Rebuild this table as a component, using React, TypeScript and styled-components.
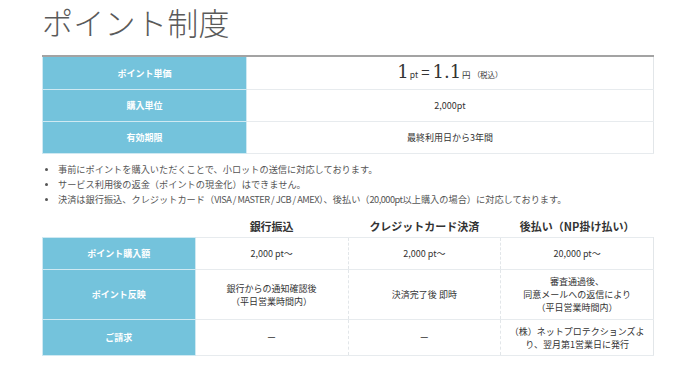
import React from "react";
import styled, { createGlobalStyle } from "styled-components";

const Global = createGlobalStyle`
  html, body { margin: 0; padding: 0; background: #fff; }
  body {
    font-family: "Noto Sans CJK JP", "Noto Sans", sans-serif;
    color: #333;
    width: 700px;
  }
`;

const Page = styled.div`
  padding: 0 46px 0 42px;
`;

const Title = styled.h1`
  margin: 0;
  padding-top: 1px;
  height: 54px;
  font-family: "Noto Sans CJK JP Light", "Noto Sans CJK JP DemiLight", "Noto Sans CJK JP", sans-serif;
  font-size: 31px;
  line-height: 42px;
  font-weight: 300;
  color: #5a5a5a;
  letter-spacing: 0.3px;
`;

const Table = styled.table<{ $top?: boolean }>`
  width: 612px;
  border-collapse: collapse;
  table-layout: fixed;
  border-top: ${(p) => (p.$top ? "2px solid #a3a3a3" : "none")};
`;

const Label = styled.th<{ $h: number }>`
  background: #74c3dc;
  color: #fff;
  font-weight: 700;
  font-size: 9px;
  height: ${(p) => p.$h}px;
  padding: 0;
  border: 1px solid #cfe9f2;
  text-align: center;
`;

const Cell = styled.td<{ $dash?: boolean }>`
  font-size: 9px;
  line-height: 13px;
  text-align: center;
  padding: 0;
  border-top: 1px solid #e7ebee;
  border-bottom: 1px solid #e7ebee;
  border-right: 1px ${(p) => (p.$dash ? "dashed" : "solid")} #e2e6e9;
  color: #333;
`;

const Head = styled.th`
  font-size: 11px;
  font-weight: 700;
  height: 22px;
  padding: 0;
  text-align: center;
  color: #333;
  border: none;
`;

const Price = styled.span`
  display: inline-flex;
  align-items: baseline;
  line-height: 20px;
`;

const Big = styled.span`
  font-family: "DejaVu Serif", "Liberation Serif", serif;
  font-size: 18px;
  color: #333;
`;

const Eq = styled.span`
  font-size: 15px;
  margin: 0 3px 0 3px;
`;

const Small = styled.span`
  font-size: 8.5px;
  margin-left: 1px;
`;

const Tiny = styled.span`
  font-size: 7.5px;
  margin-left: 2px;
`;

const Notes = styled.ul`
  margin: 0;
  padding: 8px 0 8px 16px;
  font-size: 9.2px;
  line-height: 15px;
  color: #555;
  li::marker { font-size: 8px; }
`;

const Latin = styled.span`
  letter-spacing: -0.5px;
`;

export default function App() {
  return (
    <>
      <Global />
      <Page>
        <Title>ポイント制度</Title>
        <Table $top>
          <colgroup>
            <col style={{ width: 204 }} />
            <col />
          </colgroup>
          <tbody>
            <tr>
              <Label $h={32}>ポイント単価</Label>
              <Cell>
                <Price>
                  <Big>1</Big>
                  <Small>pt</Small>
                  <Eq>=</Eq>
                  <Big>1.1</Big>
                  <Small>円</Small>
                  <Tiny>（税込）</Tiny>
                </Price>
              </Cell>
            </tr>
            <tr>
              <Label $h={31}>購入単位</Label>
              <Cell>2,000pt</Cell>
            </tr>
            <tr>
              <Label $h={31}>有効期限</Label>
              <Cell>最終利用日から3年間</Cell>
            </tr>
          </tbody>
        </Table>
        <Notes>
          <li>事前にポイントを購入いただくことで、小ロットの送信に対応しております。</li>
          <li>サービス利用後の返金（ポイントの現金化）はできません。</li>
          <li>
            決済は銀行振込、クレジットカード（<Latin>VISA / MASTER / JCB / AMEX</Latin>）、後払い（<Latin>20,000pt</Latin>以上購入の場合）に対応しております。
          </li>
        </Notes>
        <Table>
          <thead>
            <tr>
              <Head />
              <Head>銀行振込</Head>
              <Head>クレジットカード決済</Head>
              <Head>後払い（NP掛け払い）</Head>
            </tr>
          </thead>
          <tbody>
            <tr>
              <Label $h={31}>ポイント購入額</Label>
              <Cell $dash>2,000 pt〜</Cell>
              <Cell $dash>2,000 pt〜</Cell>
              <Cell>20,000 pt〜</Cell>
            </tr>
            <tr>
              <Label $h={49}>ポイント反映</Label>
              <Cell $dash>
                銀行からの通知確認後
                <br />
                （平日営業時間内）
              </Cell>
              <Cell $dash>決済完了後 即時</Cell>
              <Cell>
                審査通過後、
                <br />
                同意メールへの返信により
                <br />
                （平日営業時間内）
              </Cell>
            </tr>
            <tr>
              <Label $h={35}>ご請求</Label>
              <Cell $dash>ー</Cell>
              <Cell $dash>ー</Cell>
              <Cell>
                （株）ネットプロテクションズよ
                <br />
                り、翌月第1営業日に発行
              </Cell>
            </tr>
          </tbody>
        </Table>
      </Page>
    </>
  );
}
